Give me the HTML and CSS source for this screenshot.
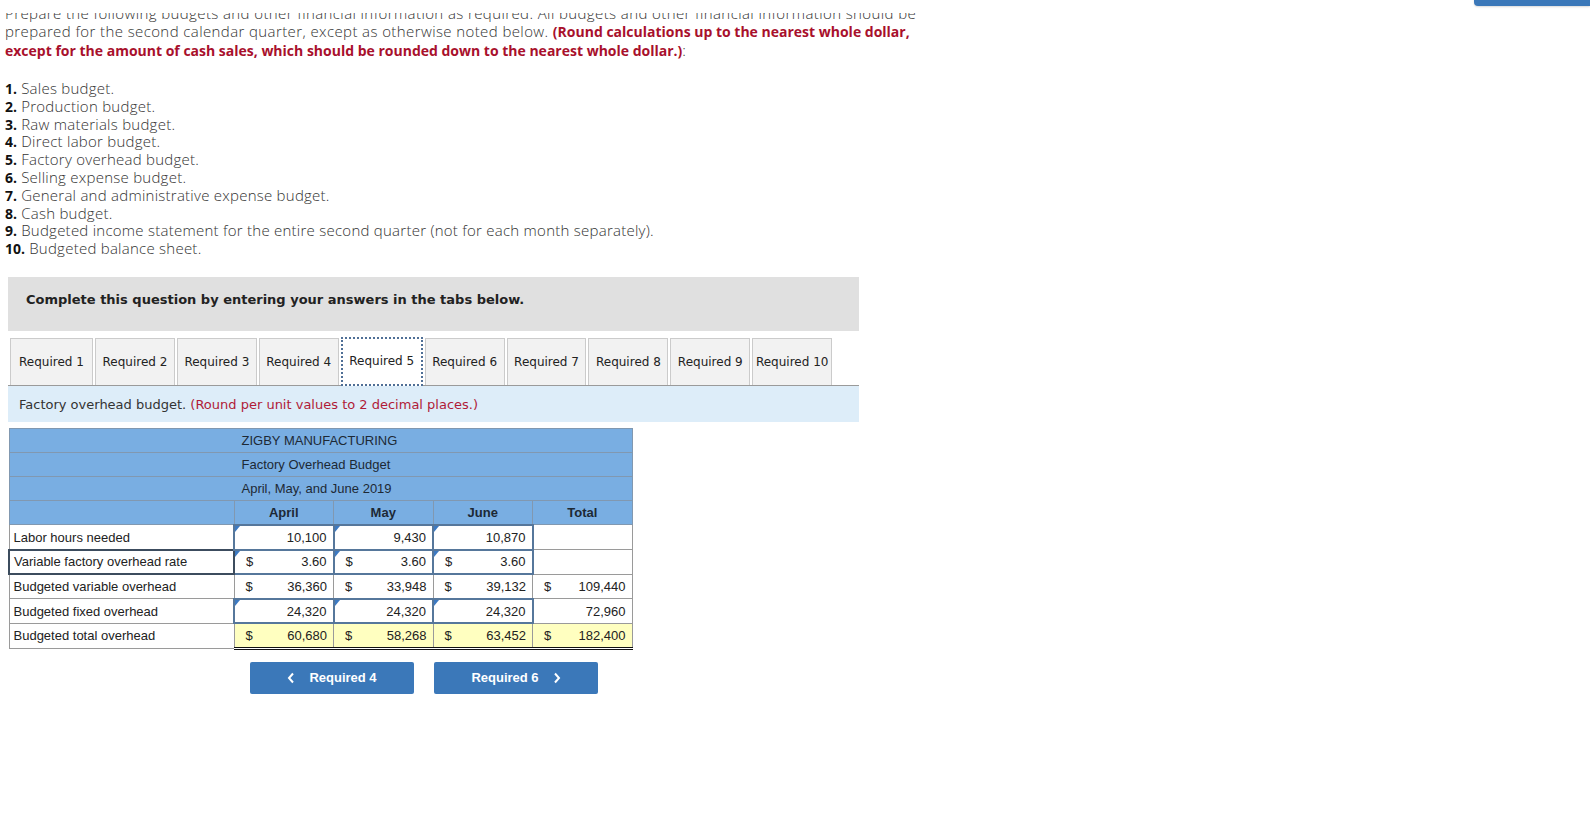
FILE: index.html
```html
<!DOCTYPE html>
<html>
<head>
  <title>Factory Overhead Budget</title>
  <link rel="stylesheet" href="styles.css">
</head>
<body>
    <header class="topbar">
        <span class="topbar-btn"></span>
    </header>
    <main class="page">
        <p class="intro">
            Prepare the following budgets and other financial information as required. All budgets and other financial information should be<br>
            prepared for the second calendar quarter, except as otherwise noted below. <strong class="note">(Round calculations up to the nearest whole dollar,</strong><br>
            <strong class="note">except for the amount of cash sales, which should be rounded down to the nearest whole dollar.)</strong>:
        </p>
        <ul class="reqs">
            <li><b>1.</b> Sales budget.</li>
            <li><b>2.</b> Production budget.</li>
            <li><b>3.</b> Raw materials budget.</li>
            <li><b>4.</b> Direct labor budget.</li>
            <li><b>5.</b> Factory overhead budget.</li>
            <li><b>6.</b> Selling expense budget.</li>
            <li><b>7.</b> General and administrative expense budget.</li>
            <li><b>8.</b> Cash budget.</li>
            <li><b>9.</b> Budgeted income statement for the entire second quarter (not for each month separately).</li>
            <li><b>10.</b> Budgeted balance sheet.</li>
        </ul>

        <section class="work">
            <div class="prompt">Complete this question by entering your answers in the tabs below.</div>
            <nav class="tabs">
                <span class="tab">Required 1</span>
                <span class="tab">Required 2</span>
                <span class="tab">Required 3</span>
                <span class="tab">Required 4</span>
                <span class="tab active">Required 5</span>
                <span class="tab">Required 6</span>
                <span class="tab">Required 7</span>
                <span class="tab">Required 8</span>
                <span class="tab">Required 9</span>
                <span class="tab">Required 10</span>
            </nav>
            <div class="instr">Factory overhead budget. <span class="instr-note">(Round per unit values to 2 decimal places.)</span></div>

            <table class="budget">
                <colgroup>
                    <col class="col-label">
                    <col class="col-money">
                    <col class="col-money">
                    <col class="col-money">
                    <col class="col-money">
                </colgroup>
                <tr class="title"><td colspan="5">ZIGBY MANUFACTURING</td></tr>
                <tr class="title"><td colspan="5">Factory Overhead Budget</td></tr>
                <tr class="title"><td colspan="5">April, May, and June 2019</td></tr>
                <tr class="heads"><td></td><th>April</th><th>May</th><th>June</th><th>Total</th></tr>
                <tr>
                    <td class="label">Labor hours needed</td>
                    <td class="inp"><div class="amt"><span></span><span>10,100</span></div></td>
                    <td class="inp"><div class="amt"><span></span><span>9,430</span></div></td>
                    <td class="inp"><div class="amt"><span></span><span>10,870</span></div></td>
                    <td></td>
                </tr>
                <tr>
                    <td class="label focus">Variable factory overhead rate</td>
                    <td class="inp"><div class="amt"><span>$</span><span>3.60</span></div></td>
                    <td class="inp"><div class="amt"><span>$</span><span>3.60</span></div></td>
                    <td class="inp"><div class="amt"><span>$</span><span>3.60</span></div></td>
                    <td></td>
                </tr>
                <tr class="calc">
                    <td class="label">Budgeted variable overhead</td>
                    <td><div class="amt"><span>$</span><span>36,360</span></div></td>
                    <td><div class="amt"><span>$</span><span>33,948</span></div></td>
                    <td><div class="amt"><span>$</span><span>39,132</span></div></td>
                    <td><div class="amt"><span>$</span><span>109,440</span></div></td>
                </tr>
                <tr>
                    <td class="label">Budgeted fixed overhead</td>
                    <td class="inp"><div class="amt"><span></span><span>24,320</span></div></td>
                    <td class="inp"><div class="amt"><span></span><span>24,320</span></div></td>
                    <td class="inp"><div class="amt"><span></span><span>24,320</span></div></td>
                    <td><div class="amt"><span></span><span>72,960</span></div></td>
                </tr>
                <tr class="grand">
                    <td class="label">Budgeted total overhead</td>
                    <td><div class="amt"><span>$</span><span>60,680</span></div></td>
                    <td><div class="amt"><span>$</span><span>58,268</span></div></td>
                    <td><div class="amt"><span>$</span><span>63,452</span></div></td>
                    <td><div class="amt"><span>$</span><span>182,400</span></div></td>
                </tr>
            </table>

            <div class="pager">
                <button class="nav-btn">
                    <svg width="8" height="12" viewBox="0 0 8 12"><polyline points="6,1.5 2,6 6,10.5" fill="none" stroke="#fff" stroke-width="2"/></svg>
                    <span>Required 4</span>
                </button>
                <button class="nav-btn">
                    <span>Required 6</span>
                    <svg width="8" height="12" viewBox="0 0 8 12"><polyline points="2,1.5 6,6 2,10.5" fill="none" stroke="#fff" stroke-width="2"/></svg>
                </button>
            </div>
        </section>
    </main>
</body>
</html>
```

FILE: styles.css
```css
/* Page */
body {
    margin: 0;
    background-color: #fff;
    color: #333;
    font-family: 'Open Sans', 'Lato', Arial, sans-serif;
}

/* Fixed header, only its bottom edge is on screen */
.topbar {
    position: fixed;
    top: 0;
    left: 0;
    right: 0;
    height: 13px;
    background-color: #fff;
    z-index: 10;
}

.topbar-btn {
    position: absolute;
    top: -24px;
    right: 0;
    width: 116px;
    height: 30px;
    background-color: #3b78b9;
    border-bottom-left-radius: 4px;
    box-shadow: 0 1px 2px rgba(0, 0, 0, 0.15);
}

.page {
    padding-left: 5px;
}

/* Question text */
.intro {
    margin: 4px 0 0 0;
    font-size: 15px;
    font-weight: 300;
    letter-spacing: 0.4px;
    line-height: 18px;
    white-space: nowrap;
    color: #333;
}

.note {
    color: #a8102c;
    font-size: 14px;
    font-weight: 700;
    letter-spacing: 0;
}

.reqs {
    list-style: none;
    margin: 20px 0 0 0;
    padding: 0;
    font-size: 15px;
    font-weight: 300;
    letter-spacing: 0.25px;
    line-height: 17.8px;
    color: #333;
}

.reqs b {
    font-size: 14px;
    font-weight: 700;
    letter-spacing: 0;
    color: #111;
}

/* Answer area */
.work {
    margin: 19px 0 0 3px;
    width: 851px;
    font-family: 'DejaVu Sans', Verdana, sans-serif;
}

.prompt {
    height: 54px;
    box-sizing: border-box;
    padding: 15px 0 0 18px;
    background-color: #e0e0e0;
    font-size: 13px;
    font-weight: bold;
    color: #222;
}

.tabs {
    display: flex;
    gap: 2px;
    margin-top: 7px;
    padding-left: 2px;
    border-bottom: 1px solid #9a9a9a;
}

.tab {
    width: 79.9px;
    height: 47px;
    box-sizing: border-box;
    display: flex;
    align-items: center;
    justify-content: center;
    background-color: #f2f2f2;
    border: 1px solid #cbcbcb;
    border-bottom: none;
    font-size: 12px;
    color: #222;
}

.tab:first-child {
    width: 83px;
}

.tab.active {
    background-color: #fff;
    width: 82px;
    margin-bottom: -1px;
    height: 49px;
    margin-top: -1px;
    border: 2px dotted #4f6f96;
}

.instr {
    height: 36px;
    box-sizing: border-box;
    padding: 11px 0 0 11px;
    background-color: #ddedf9;
    font-size: 13px;
    color: #333;
}

.instr-note {
    color: #b01b38;
}

/* Budget table */
.budget {
    margin-top: 6px;
    width: 623px;
    table-layout: fixed;
    border-collapse: collapse;
    font-family: 'Liberation Sans', Arial, sans-serif;
    font-size: 13px;
    color: #222;
    border: 1px solid #8a98a8;
}

.col-label {
    width: 225px;
}

.col-money {
    width: 99.5px;
}

.budget td,
.budget th {
    height: 23px;
    padding: 0;
    border: 1px solid #9a9a9a;
    white-space: nowrap;
}

.title td {
    background-color: #79aee2;
    border-color: #8198b0;
    padding-left: 232px;
    color: #1d2935;
}

.heads td,
.heads th {
    background-color: #79aee2;
    border-color: #8198b0;
    font-weight: bold;
    color: #1d2935;
    text-align: center;
}

.budget tr:not(.title):not(.heads) td {
    height: 22.6px;
}

.label {
    padding-left: 4px !important;
}

.label.focus {
    border: 2px solid #3c4c5e;
}

.amt {
    display: flex;
    justify-content: space-between;
    padding: 0 6px 0 11px;
}

.inp {
    position: relative;
    border: 2px solid #56779b !important;
}

.inp::before {
    content: "";
    position: absolute;
    top: 0;
    left: 0;
    border-top: 6px solid #3d7ac2;
    border-right: 5px solid transparent;
}

.calc td:not(.label) {
    border-top: 1px solid #111;
}

.grand td:not(.label) {
    background-color: #ffffc0;
    border-top: 1px solid #111;
    border-bottom: 3px double #111;
}

/* Prev / next */
.pager {
    display: flex;
    gap: 20px;
    margin: 12px 0 0 242px;
}

.nav-btn {
    width: 164px;
    height: 32px;
    display: flex;
    align-items: center;
    justify-content: center;
    gap: 14px;
    background-color: #3b78b9;
    border: none;
    border-radius: 2px;
    color: #fff;
    font-family: 'Liberation Sans', Arial, sans-serif;
    font-size: 13px;
    font-weight: bold;
    cursor: pointer;
}
```
